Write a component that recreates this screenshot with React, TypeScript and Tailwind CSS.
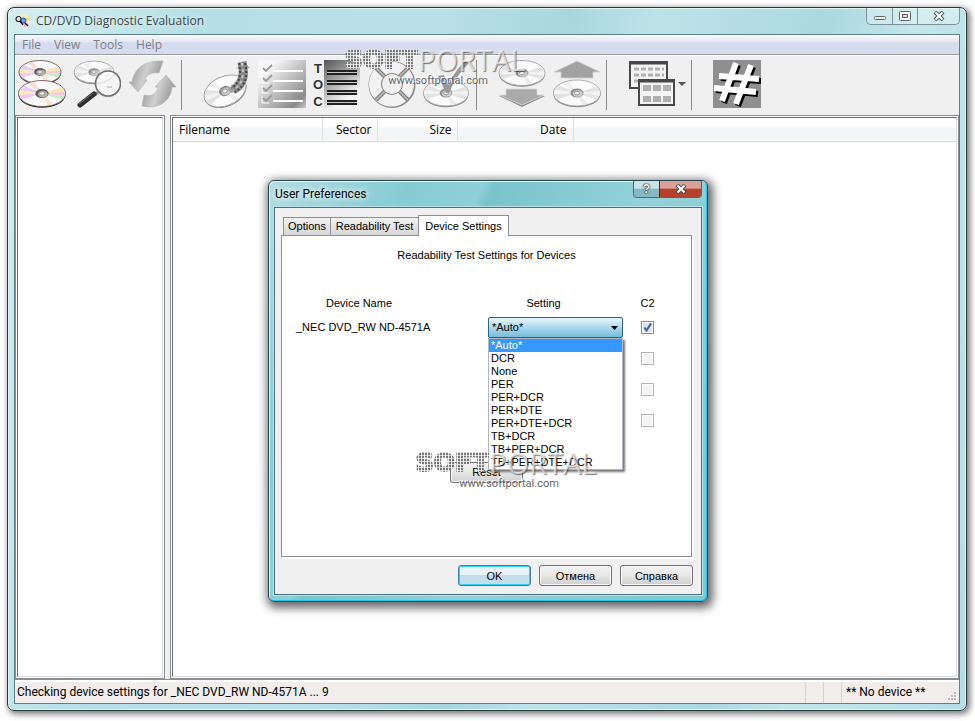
import { useState } from "react";
import clsx from "clsx";

const settings = [
  "*Auto*",
  "DCR",
  "None",
  "PER",
  "PER+DCR",
  "PER+DTE",
  "PER+DTE+DCR",
  "TB+DCR",
  "TB+PER+DCR",
  "TB+PER+DTE+DCR",
];

type DiscProps = { cx: number; cy: number; rx: number; ry: number; color?: boolean };

// from angle, to angle, rainbow fill, plain fill
const wedges: [number, number, string, string][] = [
  [150, 175, "#f3c9ee", "#e2e2e2"],
  [175, 195, "#fbf0b4", "#f4f4f4"],
  [195, 218, "#e8cdf5", "#e4e4e4"],
  [-30, -8, "#f6e8a8", "#e2e2e2"],
  [-8, 12, "#f6c8d8", "#f2f2f2"],
  [12, 32, "#cdeccd", "#e4e4e4"],
  [232, 250, "#f7ddd0", "#efefef"],
  [60, 76, "#f5e6c8", "#ebebeb"],
];

function Disc({ cx, cy, rx, ry, color }: DiscProps) {
  const point = (deg: number) => {
    const a = (deg * Math.PI) / 180;
    return `${cx + Math.cos(a) * rx * 0.96},${cy + Math.sin(a) * ry * 0.96}`;
  };
  return (
    <g>
      <ellipse cx={cx} cy={cy + 1.2} rx={rx} ry={ry} fill={color ? "#2c2424" : "#858585"} />
      <ellipse cx={cx} cy={cy} rx={rx} ry={ry} fill="#fbfbfb" stroke={color ? "#6d5c5c" : "#a5a5a5"} strokeWidth="0.9" />
      {wedges.map(([from, to, tint, plain]) => (
        <polygon
          key={from}
          points={`${cx},${cy} ${point(from)} ${point((from + to) / 2)} ${point(to)}`}
          fill={color ? tint : plain}
        />
      ))}
      <ellipse cx={cx} cy={cy} rx={rx * 0.28} ry={ry * 0.34} fill={color ? "#5f5858" : "#8f8f8f"} />
      <ellipse cx={cx + 0.8} cy={cy + 0.6} rx={rx * 0.21} ry={ry * 0.25} fill={color ? "#b5b0b0" : "#cdcdcd"} />
      <ellipse cx={cx} cy={cy} rx={rx * 0.11} ry={ry * 0.13} fill="#f4f4f4" stroke="#777" strokeWidth="0.6" />
    </g>
  );
}

function DiscsIcon() {
  return (
    <svg viewBox="0 0 48 48" className="size-12">
      <Disc cx={22} cy={12} rx={21} ry={11.5} color />
      <Disc cx={24} cy={33.5} rx={23.5} ry={13} color />
    </svg>
  );
}

function SearchDiscIcon() {
  return (
    <svg viewBox="0 0 48 48" className="size-12">
      <Disc cx={21} cy={12} rx={20} ry={11} />
      <circle cx="35" cy="23.500" r="12.500" fill="#f6f6f6" fillOpacity="0.8" stroke="#6f6f6f" strokeWidth="1.600" />
      <path d="M27 18q4-6 11-5" stroke="#fff" strokeWidth="1.500" fill="none" />
      <path d="M34 27h5" stroke="#aaa" />
      <path d="M26 31l-4 4" stroke="#888" strokeWidth="2.500" />
      <path d="M21 34L7 45" stroke="#2e2e2e" strokeWidth="5" strokeLinecap="round" />
      <path d="M20 33L6 44" stroke="#777" strokeWidth="1" />
    </svg>
  );
}

function RefreshIcon() {
  return (
    <svg viewBox="0 0 48 48" className="size-12">
      <defs>
        <linearGradient id="steel" x1="0" y1="0" x2="1" y2="0.300">
          <stop offset="0" stopColor="#8c8c8c" />
          <stop offset="0.550" stopColor="#cfcfcf" />
          <stop offset="1" stopColor="#999" />
        </linearGradient>
      </defs>
      <path d="M1 22H4C6 9 16 0 35 1L31 13C23 12 18 15 17 20H19L10 32Z" fill="url(#steel)" stroke="#b5b5b5" strokeWidth="0.600" />
      <path d="M14 46L16 35C24 37 29 34 30 27H27L38 15L48 27H44C43 40 32 50 14 46Z" fill="url(#steel)" stroke="#b5b5b5" strokeWidth="0.600" />
    </svg>
  );
}

function VideoDiscIcon() {
  return (
    <svg viewBox="0 0 48 48" className="size-12">
      <g transform="rotate(-24 22 31)">
        <Disc cx={22} cy={31} rx={22} ry={14.5} />
      </g>
      <path d="M24 29C33 26 37 19 36 8L33 9L40 1L47 8L44 8C47 21 40 31 28 33Z" fill="#a3a3a3" />
      <path d="M39 2q5 21-9 28" fill="none" stroke="#8a8a8a" strokeWidth="9" />
      <path d="M36 3q4 19-8 25M42 3q5 20-10 29" fill="none" stroke="#444" strokeWidth="2" strokeDasharray="2 2" />
      <path d="M39 3q4 20-9 27" fill="none" stroke="#c4c4c4" strokeWidth="2" strokeDasharray="3 3" />
    </svg>
  );
}

function ChecklistIcon() {
  return (
    <svg viewBox="0 0 48 48" className="size-12">
      <defs>
        <linearGradient id="sheet" x1="0" y1="0" x2="1" y2="1">
          <stop offset="0.200" stopColor="#f6f6f6" />
          <stop offset="0.850" stopColor="#8a8a8a" />
          <stop offset="1" stopColor="#c9c9c9" />
        </linearGradient>
      </defs>
      <rect width="48" height="48" fill="url(#sheet)" />
      {[11, 21, 31, 41].map((y) => (
        <g key={y} fill="none">
          <path d={`M4 ${y - 5}v7h7`} stroke="#fff" />
          <path d={`M5 ${y - 3}l3 3l6-6`} stroke="#999" strokeWidth="1.800" />
          <path d={`M15 ${y}h30`} stroke="#fff" strokeWidth="2" />
        </g>
      ))}
    </svg>
  );
}

function TocIcon() {
  return (
    <svg viewBox="0 0 48 48" className="size-12">
      <defs>
        <linearGradient id="toc" x1="0" y1="0" x2="0.500" y2="1">
          <stop offset="0" stopColor="#555" />
          <stop offset="0.900" stopColor="#f4f4f4" />
        </linearGradient>
      </defs>
      <rect x="11" width="36" height="48" fill="url(#toc)" />
      <g fill="#333" fontFamily="Liberation Sans, sans-serif" fontWeight="bold" fontSize="13" textAnchor="middle">
        <text x="5" y="13">T</text>
        <text x="5" y="29">O</text>
        <text x="5" y="46">C</text>
      </g>
      {[11, 21, 31, 41].map((y) => (
        <g key={y}>
          <path d={`M14 ${y + 1.5}h30`} stroke="#c8c8c8" strokeWidth="5" />
          <path d={`M14 ${y}h30M14 ${y + 3}h30`} stroke="#222" strokeWidth="2" />
        </g>
      ))}
    </svg>
  );
}

function LifebuoyIcon() {
  return (
    <svg viewBox="0 0 48 48" className="size-12">
      <circle cx="24" cy="24.500" r="17" fill="none" stroke="#888" strokeWidth="13" />
      <circle cx="23.500" cy="24" r="16.500" fill="none" stroke="#f3f3f3" strokeWidth="12" />
      <path d="M8 8l9 9M40 8L31 17M8 40l9-9M40 40L31 31" stroke="#777" strokeWidth="4" />
      <path d="M8 8l9 9M40 8L31 17M8 40l9-9M40 40L31 31" stroke="#b4b4b4" strokeWidth="2" />
      <circle cx="24" cy="24" r="10.500" fill="#efefef" stroke="#888" />
    </svg>
  );
}

function VerifyDiscIcon() {
  return (
    <svg viewBox="0 0 48 48" className="size-12">
      <Disc cx={23} cy={33} rx={22.5} ry={13} />
      <path d="M15 16l6-1l4 10q7-14 16-23l5 1Q33 15 26 33h-3Z" fill="#999" />
    </svg>
  );
}

function LoadDiscIcon() {
  return (
    <svg viewBox="0 0 48 48" className="size-12">
      <Disc cx={24} cy={13} rx={23} ry={12.5} />
      <path d="M8 30h31v6h8L24 47L1 36h7Z" fill="#8e8e8e" />
      <path d="M8 29h31v6h7L24 45L1 35h7Z" fill="#aaa" stroke="#d8d8d8" strokeWidth="0.800" />
    </svg>
  );
}

function EjectDiscIcon() {
  return (
    <svg viewBox="0 0 48 48" className="size-12">
      <path d="M24 1L47 12h-7v6H8v-6H1Z" fill="#a2a2a2" stroke="#d0d0d0" strokeWidth="0.800" />
      <Disc cx={24} cy={33} rx={23.5} ry={13} />
    </svg>
  );
}

function WindowsIcon() {
  return (
    <svg viewBox="0 0 48 48" className="size-12">
      <rect x="2" y="2" width="37" height="26" fill="#f4f4f4" stroke="#484848" strokeWidth="2" />
      <path d="M1 3h39" stroke="#484848" strokeWidth="3" />
      {[9, 15, 21].map((y) => (
        <path key={y} d={`M6 ${y}h30`} stroke="#b0b0b0" strokeWidth="3" strokeDasharray="5 2" />
      ))}
      <rect x="11" y="20" width="35" height="25" fill="#f4f4f4" stroke="#484848" strokeWidth="2" />
      <path d="M10 21h37" stroke="#484848" strokeWidth="3" />
      {[28, 39].map((y) => (
        <path key={y} d={`M15 ${y}h28`} stroke="#b0b0b0" strokeWidth="6" strokeDasharray="8 2" />
      ))}
    </svg>
  );
}

function HashIcon() {
  const strokes = "M23 3L9 41M38 5L23 44M6 16L46 19M1 28L43 32";
  return (
    <svg viewBox="0 0 48 48" className="size-12">
      <rect width="48" height="48" fill="#8f8f8f" />
      <path d={strokes} transform="translate(2 2)" stroke="#000" strokeWidth="6" />
      <path d={strokes} stroke="#fff" strokeWidth="6" />
    </svg>
  );
}

function AppIcon() {
  return (
    <svg viewBox="0 0 16 16" className="size-4">
      <circle cx="9" cy="7.500" r="6.500" fill="#f8e6ea" />
      <path d="M9 7L14 3L15 8Z" fill="#efe36f" />
      <path d="M9 8L14 12L9 14Z" fill="#f3a7c4" />
      <path d="M9 7L5 2L10 1Z" fill="#f6ecb0" />
      <circle cx="3.500" cy="6" r="2.500" fill="#e7e6f5" stroke="#222" strokeWidth="1.200" />
      <circle cx="8.500" cy="7.500" r="2.500" fill="#6aa0f0" stroke="#1d4fa0" />
      <path d="M5 8l3 4M10 10l3 3" stroke="#111" strokeWidth="1.400" />
    </svg>
  );
}

function CrossGlyph() {
  return (
    <svg viewBox="0 0 12 10" className="h-[10px] w-3">
      <path d="M2 1L10 9M10 1L2 9" stroke="#4c565c" strokeWidth="4" />
      <path d="M2.500 1.500L9.500 8.500M9.500 1.500L2.500 8.500" stroke="#fff" strokeWidth="2" />
    </svg>
  );
}

function ToolButton({ label, children }: { label: string; children: React.ReactNode }) {
  return (
    <button type="button" aria-label={label} className="flex shrink-0 items-center">
      {children}
    </button>
  );
}

function ToolSeparator() {
  return <div className="mr-[14px] -ml-[2px] h-[50px] w-px shrink-0 bg-[#8c8c8c]" />;
}

function Watermark() {
  return (
    <div aria-hidden="true" className="pointer-events-none flex w-[184px] flex-col items-center">
      <div className="flex h-7 items-center">
        <span className="bg-[repeating-linear-gradient(0deg,#ffffffb0_0_1px,transparent_1px_3px),repeating-linear-gradient(90deg,#777_0_2px,#eee_2px_3px)] bg-clip-text font-['DejaVu_Sans',sans-serif] text-[25px] leading-7 font-bold text-transparent [-webkit-text-stroke:2px_transparent]">
          SOFT
        </span>
        <span className="font-['Open_Sans',sans-serif] text-[29px] leading-7 font-medium text-white/65 [text-shadow:1px_1px_1px_#00000080]">
          PORTAL
        </span>
      </div>
      <span className="pl-[6px] font-['Roboto',sans-serif] text-[11px] leading-[14px] text-[#666] [text-shadow:-1px_-1px_0_#fff]">
        www.softportal.com
      </span>
    </div>
  );
}

const dialogButton =
  "h-[21px] w-[73px] rounded-[3px] border border-[#707070] bg-linear-to-b from-[#f3f3f3] via-[#e6e6e6] via-50% to-[#cfcfcf] text-center leading-4 shadow-[inset_0_0_0_1px_#f8f8f8]";

function DeviceSettings() {
  const [setting, setSetting] = useState(settings[0]);
  return (
    <div className="mr-[9px] ml-[6px] h-[322px] border border-[#8c8e9c] bg-white shadow-[2px_2px_0_#fff]">
      <p className="pt-[11px] text-center leading-4">Readability Test Settings for Devices</p>
      <table className="mt-8 ml-[14px] table-fixed border-collapse">
        <thead>
          <tr className="h-4">
            <th className="w-[192px] p-0 pr-[66px] font-normal">Device Name</th>
            <th className="w-[135px] p-0 pr-6 font-normal">Setting</th>
            <th className="w-[49px] p-0 font-normal">C2</th>
          </tr>
        </thead>
        <tbody>
          {["_NEC DVD_RW ND-4571A", "", "", ""].map((device, i) => (
            <tr key={i} className="h-[31px]">
              <td className="p-0">{device}</td>
              <td className="p-0">
                {device && (
                  <div className="relative">
                    <select
                      aria-label="Setting"
                      value={setting}
                      onChange={(e) => setSetting(e.target.value)}
                      className="block h-[21px] w-full appearance-none rounded-[2px] border border-[#2c628b] bg-linear-to-b from-[#dff1fa] from-10% via-[#a9d8ed] via-50% to-[#78bcdc] px-[3px] leading-4"
                    >
                      {settings.map((s) => (
                        <option key={s}>{s}</option>
                      ))}
                    </select>
                    <svg viewBox="0 0 7 4" className="pointer-events-none absolute top-[9px] right-[5px] h-1 w-[7px]">
                      <path d="M0 0h7L3.500 4Z" />
                    </svg>
                    <ul
                      role="listbox"
                      aria-label="Setting"
                      className="absolute top-[21px] left-0 z-10 w-full border border-[#b0b4c2] bg-white shadow-[2px_2px_2px_#777]"
                    >
                      {settings.map((s) => (
                        <li
                          key={s}
                          role="option"
                          aria-selected={s === setting}
                          onClick={() => setSetting(s)}
                          className={clsx("h-[13px] pl-[2px] leading-[13px]", s === setting && "bg-[#3399ff] text-white")}
                        >
                          {s}
                        </li>
                      ))}
                    </ul>
                  </div>
                )}
              </td>
              <td className="p-0">
                <div className="flex justify-center">
                  <input
                    type="checkbox"
                    aria-label="C2"
                    defaultChecked={i === 0}
                    disabled={i > 0}
                    className="peer size-[13px] appearance-none border border-[#8e8f8f] bg-[#f4f4f4] shadow-[inset_0_0_0_1px_#fff] checked:bg-[#d9e3ee] disabled:border-[#b5b5b5]"
                  />
                  <svg viewBox="0 0 13 13" className="pointer-events-none absolute hidden size-[13px] peer-checked:block">
                    <path d="M3.500 6.500L5.500 9.500L10 2.500" fill="none" stroke="#3a5f9a" strokeWidth="2" />
                  </svg>
                </div>
              </td>
            </tr>
          ))}
        </tbody>
      </table>
      <div className="mt-[26px] flex justify-center">
        <button type="button" className={dialogButton}>
          Reset
        </button>
      </div>
    </div>
  );
}

function PreferencesDialog() {
  return (
    <div
      role="dialog"
      aria-label="User Preferences"
      className="w-[440px] rounded-[6px] border border-[#24454c] bg-[linear-gradient(115deg,#b4dde2_0,#86cbd3_22%,#90cfd7_34%,#7ac3cd_36%,#93d1d8_60%,#7fc6cf_100%)] px-[5px] pb-[6px] font-['Liberation_Sans',sans-serif] text-[11px] text-black shadow-[2px_3px_10px_3px_#00000099,inset_-1px_-1px_0_#18c8f0,inset_1px_1px_0_#e4f7f9]"
    >
      <div className="flex h-[26px] items-start justify-between">
        <h2 className="pl-px font-['Roboto',sans-serif] text-[12px] leading-[26px] [text-shadow:0_0_6px_#fff,0_0_6px_#fff]">
          User Preferences
        </h2>
        <div className="flex h-[17px] overflow-hidden rounded-b-[4px] border border-t-0 border-[#4d6a73]">
          <button
            type="button"
            aria-label="Help"
            className="w-[25px] bg-linear-to-b from-[#c9e4e9] from-45% to-[#84b8c3] to-50% text-[12px] leading-4 font-bold text-white [text-shadow:0_0_1px_#222,0_0_1px_#222,0_0_2px_#222]"
          >
            ?
          </button>
          <button
            type="button"
            aria-label="Close"
            className="flex w-[42px] items-center justify-center border-l border-[#5a2420] bg-linear-to-b from-[#dba096] from-45% to-[#b5402c] to-50%"
          >
            <CrossGlyph />
          </button>
        </div>
      </div>
      <div className="border border-[#48707a] bg-[#f0f0f0] pt-[7px] pb-2 shadow-[0_0_0_1px_#b9e4e9]">
        <div role="tablist" className="relative flex items-end pl-2">
          <button role="tab" type="button" className="h-[18px] w-12 border border-b-0 border-[#8c8e9c] bg-linear-to-b from-[#f2f2f2] to-[#d6d6d6]">
            Options
          </button>
          <button role="tab" type="button" className="h-[18px] w-[87px] border-t border-[#8c8e9c] bg-linear-to-b from-[#f2f2f2] to-[#d6d6d6] whitespace-nowrap">
            Readability Test
          </button>
          <button role="tab" type="button" aria-selected="true" className="-mb-px h-[21px] w-[91px] border border-b-0 border-[#8c8e9c] bg-white">
            Device Settings
          </button>
        </div>
        <DeviceSettings />
        <div className="mt-2 flex justify-end gap-2 pr-2">
          <button
            type="button"
            className="h-[21px] w-[73px] rounded-[3px] border border-[#3c7fb1] bg-linear-to-b from-[#e9f4f8] from-45% to-[#c2deea] to-50% leading-4 shadow-[inset_0_0_0_1px_#38cdf5]"
          >
            OK
          </button>
          <button type="button" className={dialogButton}>
            Отмена
          </button>
          <button type="button" className={dialogButton}>
            Справка
          </button>
        </div>
      </div>
    </div>
  );
}

export default function App() {
  return (
    <div className="relative flex h-screen min-h-[500px] flex-col bg-white pt-[7px] pr-2 pb-[10px] pl-[7px] font-['Open_Sans',sans-serif] text-[12px] text-black">
      <div className="flex min-h-0 flex-1 flex-col rounded-[7px] border border-[#26373a] bg-[linear-gradient(100deg,#d4eeef_0,#b6dfe5_18%,#b9e0e6_40%,#a9d6dd_52%,#bde3e8_60%,#acd8df_76%,#c3e6ea_84%,#b3dee4_100%)] px-[6px] pb-[6px] shadow-[2px_2px_6px_1px_#00000088,inset_0_0_0_1px_#e2f5f6]">
        <header className="flex h-[26px] shrink-0 items-start justify-between">
          <div className="flex items-center gap-[5px] pl-px">
            <AppIcon />
            <h1 className="leading-[26px] text-[#3c4448] [text-shadow:0_0_6px_#fff]">CD/DVD Diagnostic Evaluation</h1>
          </div>
          <div className="flex h-[17px] overflow-hidden rounded-b-[5px] border border-t-0 border-[#7c9298] bg-white/30">
            <button type="button" aria-label="Minimize" className="flex w-[25px] items-center justify-center">
              <svg viewBox="0 0 12 10" className="h-[10px] w-3">
                <rect x="0.500" y="5.500" width="11" height="3" rx="1" fill="#fff" stroke="#5b666b" />
              </svg>
            </button>
            <button type="button" aria-label="Maximize" className="flex w-[25px] items-center justify-center border-l border-[#7c9298]">
              <svg viewBox="0 0 12 10" className="h-[10px] w-3">
                <rect x="0.500" y="0.500" width="11" height="9" rx="1" fill="#fff" stroke="#5b666b" />
                <rect x="3.500" y="3.500" width="5" height="3" fill="#c4e2e7" stroke="#5b666b" />
              </svg>
            </button>
            <button type="button" aria-label="Close" className="flex w-[42px] items-center justify-center border-l border-[#7c9298]">
              <CrossGlyph />
            </button>
          </div>
        </header>

        <div className="flex min-h-0 flex-1 flex-col border border-[#5f7f85] bg-[#f0f0f0]">
          <nav className="flex h-5 shrink-0 items-center gap-[13px] border-b border-[#9a9ca4] bg-linear-to-b from-[#f8f9fc] from-0% via-[#e4e8f3] via-35% to-[#d6dcee] to-40% pl-[7px] text-[#7e7f86]">
            {["File", "View", "Tools", "Help"].map((item) => (
              <button key={item} type="button">
                {item}
              </button>
            ))}
          </nav>

          <div className="flex h-[60px] shrink-0 items-start gap-[7px] overflow-hidden border-t border-white pt-1 pl-[3px]">
            <ToolButton label="Drives">
              <DiscsIcon />
            </ToolButton>
            <ToolButton label="Examine disc">
              <SearchDiscIcon />
            </ToolButton>
            <ToolButton label="Refresh">
              <RefreshIcon />
            </ToolButton>
            <ToolSeparator />
            <ToolButton label="Video">
              <VideoDiscIcon />
            </ToolButton>
            <ToolButton label="Tests">
              <ChecklistIcon />
            </ToolButton>
            <ToolButton label="Contents">
              <TocIcon />
            </ToolButton>
            <ToolButton label="Rescue">
              <LifebuoyIcon />
            </ToolButton>
            <ToolButton label="Verify">
              <VerifyDiscIcon />
            </ToolButton>
            <ToolSeparator />
            <ToolButton label="Load disc">
              <LoadDiscIcon />
            </ToolButton>
            <ToolButton label="Eject disc">
              <EjectDiscIcon />
            </ToolButton>
            <ToolSeparator />
            <ToolButton label="View mode">
              <WindowsIcon />
              <svg viewBox="0 0 8 4" className="ml-[2px] h-1 w-2">
                <path d="M0 0h8L4 4Z" fill="#555" />
              </svg>
            </ToolButton>
            <ToolSeparator />
            <ToolButton label="Hash">
              <HashIcon />
            </ToolButton>
          </div>

          <main className="flex min-h-0 flex-1 gap-[5px] border-b border-[#8a8d94]">
            <section aria-label="Discs" className="w-[150px] shrink-0 border border-[#8a8d94] bg-white p-px">
              <div className="h-full border border-[#dcdcdc] border-t-[#6b6b6b] border-l-[#6b6b6b]" />
            </section>
            <section aria-label="Files" className="min-w-0 flex-1 border border-[#8a8d94] bg-white p-px">
              <div className="h-full border border-[#dcdcdc] border-t-[#6b6b6b] border-l-[#6b6b6b]">
                <table className="w-full table-fixed border-collapse">
                  <thead>
                    <tr className="h-[23px] border-b border-[#d5d5d5] bg-linear-to-b from-white from-40% to-[#f4f5f7] to-45%">
                      <th className="w-[149px] border-r border-[#dfe0e2] p-0 pt-[2px] pl-[6px] text-left font-normal">Filename</th>
                      <th className="w-[55px] border-r border-[#dfe0e2] p-0 pt-[2px] pr-[5px] text-right font-normal">Sector</th>
                      <th className="w-20 border-r border-[#dfe0e2] p-0 pt-[2px] pr-[5px] text-right font-normal">Size</th>
                      <th className="w-[116px] border-r border-[#dfe0e2] p-0 pt-[2px] pr-[6px] text-right font-normal">Date</th>
                      <th className="p-0" />
                    </tr>
                  </thead>
                </table>
              </div>
            </section>
          </main>

          <footer className="flex h-[23px] shrink-0 items-stretch border-t-2 border-white bg-[#f0edec] font-['Roboto',sans-serif] leading-[21px]">
            <p className="min-w-0 flex-1 truncate pl-[2px]">Checking device settings for _NEC DVD_RW ND-4571A ... 9</p>
            <div className="w-[18px] border-l border-[#d3d0cf]" />
            <div className="w-[18px] border-l border-[#d3d0cf]" />
            <div className="flex w-[118px] items-end justify-between border-l border-[#d3d0cf] pl-1">
              <span>** No device **</span>
              <svg viewBox="0 0 10 10" className="mr-[2px] mb-[2px] size-[10px]">
                <path d="M7 1h2v2H7zM7 4h2v2H7zM4 4h2v2H4zM7 7h2v2H7zM4 7h2v2H4zM1 7h2v2H1z" fill="#bdbab8" />
              </svg>
            </div>
          </footer>
        </div>
      </div>

      <div className="absolute inset-x-0 top-[180px] flex justify-center pl-px">
        <PreferencesDialog />
      </div>
      <div className="absolute top-[46px] left-[343px] z-20">
        <Watermark />
      </div>
      <div className="absolute top-[449px] left-[414px] z-20">
        <Watermark />
      </div>
    </div>
  );
}
